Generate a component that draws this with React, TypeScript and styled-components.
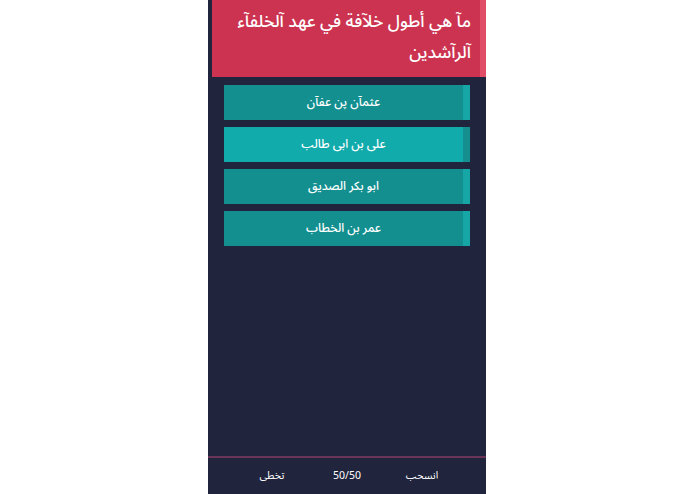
import styled, {createGlobalStyle} from "styled-components";

const GlobalStyle = createGlobalStyle`
  html, body {
    margin: 0;
    padding: 0;
    background: #ffffff;
  }
  body {
    font-family: "Noto Sans Arabic", "Noto Sans Arabic UI", "Noto Naskh Arabic", "DejaVu Sans", sans-serif;
  }
`

const answers = [
    {text: "عثمآن پن عفآن", active: false},
    {text: "على بن ابى طالب", active: true},
    {text: "ابو بكر الصديق", active: false},
    {text: "عمر بن الخطاب", active: false},
];

export default function App() {
    return (
        <Page>
            <GlobalStyle/>
            <Screen>
                <Question dir="rtl">مآ هي أطول خلآفة في عهد آلخلفآء آلرآشدين</Question>
                <AnswerList>
                    {answers.map((a) => (
                        <Answer key={a.text} $active={a.active} dir="rtl">{a.text}</Answer>
                    ))}
                </AnswerList>
                <Footer dir="rtl">
                    <FooterItem>انسحب</FooterItem>
                    <FooterItem>50/50</FooterItem>
                    <FooterItem>تخطى</FooterItem>
                </Footer>
            </Screen>
        </Page>
    )
};

const Page = styled.div`
  display: flex;
  justify-content: center;
  width: 100%;
  height: 100vh;
  background: #ffffff;
`

const Screen = styled.div`
  display: flex;
  flex-direction: column;
  width: 278px;
  height: 100%;
  margin-right: 1px;
  background: #20253d;
`

const Question = styled.h1`
  margin: 0 0 0 4px;
  height: 77px;
  box-sizing: border-box;
  padding: 6px 9px 0 6px;
  background: #cc3350;
  border-right: 6px solid #e14d66;
  color: #ffffff;
  font-size: 17.2px;
  font-weight: 500;
  line-height: 31px;
  text-align: right;
`

const AnswerList = styled.div`
  display: flex;
  flex-direction: column;
  gap: 7px;
  flex: 1;
  padding: 8px 16px 0 16px;
`

const Answer = styled.button<{ $active: boolean }>`
  height: 35px;
  border: none;
  border-right: 7px solid ${p => p.$active ? "#158e8f" : "#16a6a6"};
  background: ${p => p.$active ? "#12abab" : "#138f90"};
  color: #ffffff;
  font-family: inherit;
  font-size: 12px;
  font-weight: 500;
  text-align: center;
  padding: 0;
  cursor: pointer;
`

const Footer = styled.div`
  display: grid;
  grid-template-columns: repeat(3, 75px);
  justify-content: center;
  align-items: center;
  height: 36px;
  border-top: 2px solid #6a3458;
`

const FooterItem = styled.span`
  color: #ffffff;
  font-size: 10.5px;
  text-align: center;
`
